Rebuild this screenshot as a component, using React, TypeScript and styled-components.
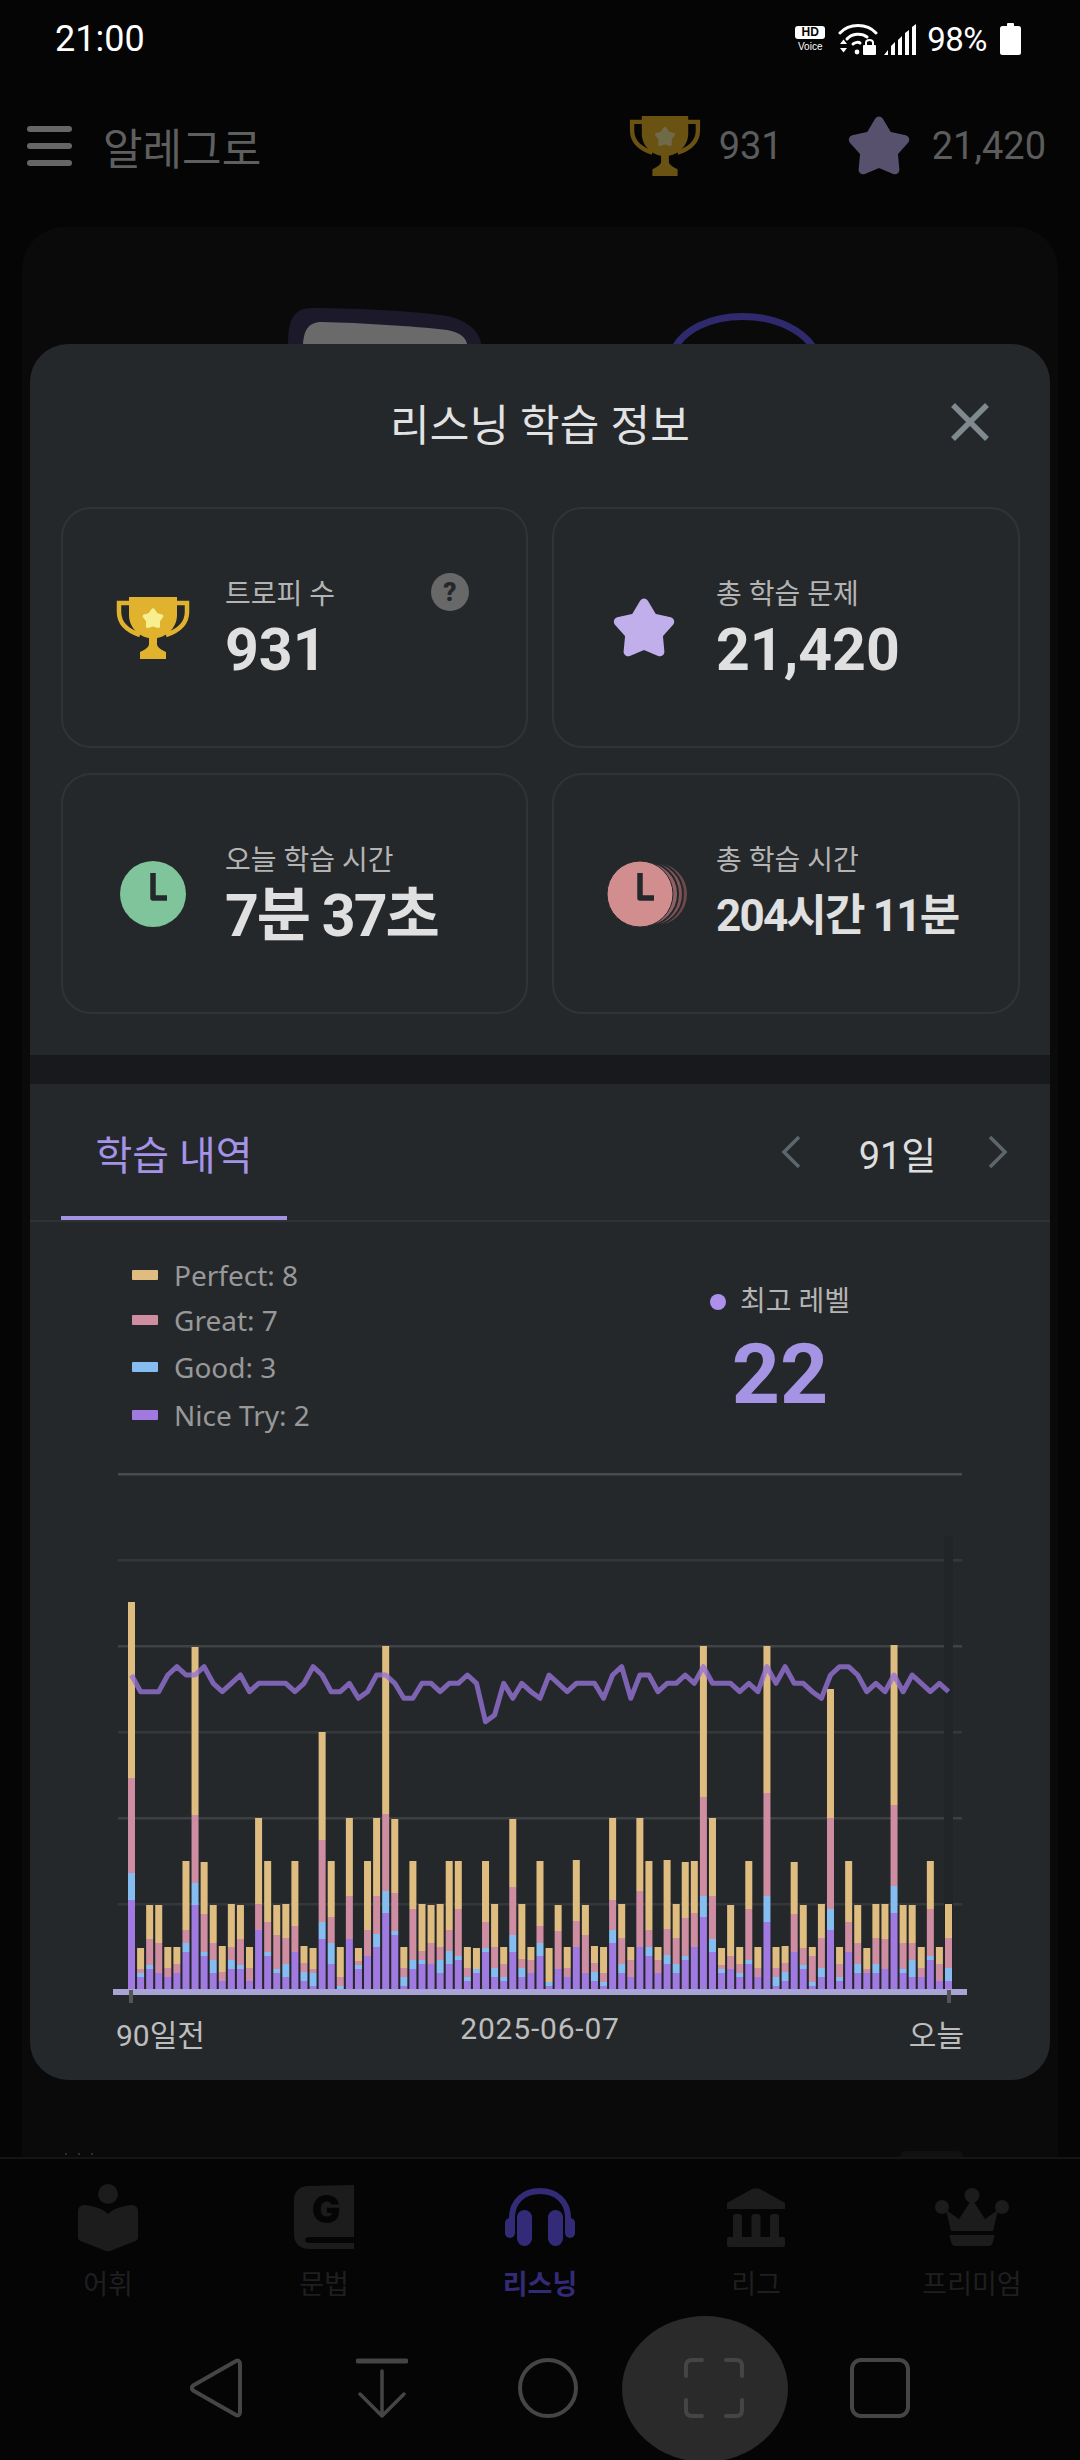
import React from 'react';
import styled, { createGlobalStyle } from 'styled-components';

const KR = `Roboto, "Noto Sans CJK KR", sans-serif`;

const Global = createGlobalStyle`
  html, body { margin: 0; padding: 0; background: #050506; }
  * { box-sizing: border-box; }
`;

const Screen = styled.div`
  position: relative;
  width: 1080px;
  height: 2460px;
  overflow: hidden;
  display: flex;
  flex-direction: column;
  background: #050506;
  font-family: ${KR};
`;

const StatusBar = styled.div`
  height: 76px;
  padding: 2px 59px 0 55px;
  display: flex;
  align-items: center;
  color: #fff;
`;
const Time = styled.div`
  font-size: 36px;
  flex: 1;
`;
const StatusIcons = styled.div`
  display: flex;
  align-items: center;
`;
const HdBadge = styled.div`
  width: 30px;
  margin-right: 13px;
  display: flex;
  flex-direction: column;
  align-items: center;
`;
const HdMark = styled.div`
  width: 30px;
  height: 13px;
  background: #fff;
  border-radius: 3px;
  color: #050506;
  font: 900 12px/13px "Liberation Sans", sans-serif;
  text-align: center;
  margin-bottom: 3px;
`;
const VoiceText = styled.div`
  font: 400 10px/10px "Liberation Sans", sans-serif;
  color: #fff;
`;
const SignalGap = styled.div`
  width: 6px;
`;
const Percent = styled.div`
  font-size: 33px;
  margin: 0 13px 0 10px;
  letter-spacing: -0.5px;
`;

const AppBar = styled.div`
  height: 140px;
  padding: 0 34px 0 27px;
  display: flex;
  align-items: center;
`;
const Burger = styled.div`
  width: 45px;
  display: flex;
  flex-direction: column;
  gap: 11px;
  margin-right: 31px;
`;
const BurgerLine = styled.div`
  height: 6px;
  border-radius: 3px;
  background: #666;
`;
const AppTitle = styled.div`
  flex: 1;
  font-size: 43px;
  color: #5f5f5f;
`;
const AppStat = styled.div<{ $gap: number }>`
  font-size: 38px;
  color: #5c5c5c;
  margin-left: ${p => p.$gap}px;
`;
const AppIconBox = styled.div<{ $gap?: number }>`
  display: flex;
  margin-left: ${p => p.$gap ?? 0}px;
`;

const BackCard = styled.div`
  flex: 1;
  margin: 11px 22px 0;
  padding-top: 81px;
  border-radius: 42px 42px 0 0;
  background: #0a0a0b;
  overflow: hidden;
  display: flex;
  flex-direction: column;
`;
const Peek = styled.svg`
  display: block;
`;
const CardFoot = styled.div`
  margin-top: auto;
  height: 6px;
  padding: 0 95px 0 43px;
  display: flex;
  justify-content: space-between;
  align-items: flex-end;
`;
const FootDots = styled.div`
  display: flex;
  gap: 11px;
  padding-bottom: 2px;
`;
const FootDot = styled.span`
  width: 2px;
  height: 2px;
  background: #2e2e2e;
`;
const FootTab = styled.div`
  width: 63px;
  height: 6px;
  border-radius: 8px 8px 0 0;
  background: #111;
`;

const BottomNav = styled.div`
  height: 159px;
  border-top: 2px solid #131516;
  display: flex;
  padding-top: 24px;
  background: #050506;
`;
const NavItem = styled.div<{ $active?: boolean }>`
  width: 216px;
  display: flex;
  flex-direction: column;
  align-items: center;
  color: ${p => (p.$active ? '#342b78' : '#1f1f20')};
  font-size: 27px;
  font-weight: ${p => (p.$active ? 700 : 400)};
`;
const NavIcon = styled.div`
  height: 68px;
  display: flex;
  align-items: center;
  margin-bottom: 12px;
`;

const SysNav = styled.div`
  height: 144px;
  display: flex;
  align-items: center;
  padding: 0 0 0 133px;
  background: #050506;
`;
const SysBtn = styled.div`
  position: relative;
  width: 166px;
  display: flex;
  justify-content: center;
`;
const CaptureDisc = styled.div`
  position: absolute;
  left: -9px;
  top: -42px;
  width: 166px;
  height: 146px;
  border-radius: 50%;
  background: #2a2a2a;
`;
const SysSvg = styled.svg`
  position: relative;
  display: block;
`;

const Modal = styled.div`
  position: absolute;
  left: 30px;
  top: 344px;
  width: 1020px;
  height: 1736px;
  border-radius: 38px;
  background: #25282b;
  overflow: hidden;
`;
const ModalHeader = styled.div`
  height: 163px;
  padding-bottom: 8px;
  display: grid;
  grid-template-columns: 1fr auto 1fr;
  align-items: center;
`;
const ModalTitle = styled.div`
  font-size: 43px;
  color: #e2e2e2;
  letter-spacing: 0.2px;
`;
const CloseBtn = styled.svg`
  justify-self: end;
  margin-right: 60px;
  display: block;
`;

const StatGrid = styled.div`
  padding: 0 30px 0 31px;
  display: grid;
  grid-template-columns: 467px 468px;
  grid-auto-rows: 241px;
  column-gap: 24px;
  row-gap: 25px;
`;
const StatCard = styled.div`
  position: relative;
  border: 2px solid #313437;
  border-radius: 30px;
  padding-left: 48px;
  display: flex;
  align-items: center;
`;
const StatIcon = styled.div`
  width: 84px;
  margin-right: 30px;
  display: flex;
  justify-content: center;
  svg {
    flex: none;
  }
`;
const StatText = styled.div`
  display: flex;
  flex-direction: column;
  padding-top: 5px;
`;
const StatLabel = styled.div`
  font-size: 28px;
  line-height: 36px;
  color: #b4b4b4;
`;
const StatValue = styled.div<{ $size?: number; $track?: number }>`
  font-size: ${p => p.$size ?? 59}px;
  line-height: 66px;
  margin-top: 4px;
  font-weight: 700;
  color: #e0e0e0;
  letter-spacing: ${p => p.$track ?? 0}px;
`;
const HelpBadge = styled.div`
  position: absolute;
  top: 64px;
  right: 57px;
  width: 38px;
  height: 38px;
  border-radius: 50%;
  background: #686868;
  color: #25282b;
  font: 900 26px/38px Roboto, sans-serif;
  text-align: center;
`;

const Band = styled.div`
  margin-top: 41px;
  height: 29px;
  background: #18191c;
`;

const TabRow = styled.div`
  height: 138px;
  border-bottom: 2px solid #303336;
  display: flex;
  align-items: stretch;
`;
const Tab = styled.div`
  width: 226px;
  height: 136px;
  margin-left: 31px;
  padding-top: 5px;
  border-bottom: 4px solid #a293e3;
  display: flex;
  align-items: center;
  justify-content: center;
  color: #a493e6;
  font-size: 40px;
  flex: none;
`;
const Pager = styled.div`
  margin-left: auto;
  padding: 0 42px 0 0;
  display: flex;
  align-items: center;
`;
const PagerValue = styled.div`
  width: 187px;
  padding-left: 6px;
  text-align: center;
  font-size: 38px;
  color: #dedede;
`;

const Summary = styled.div`
  height: 238px;
  display: flex;
`;
const Legend = styled.div`
  width: 651px;
  padding: 32px 0 0 102px;
  display: flex;
  flex-direction: column;
`;
const LegendRow = styled.div<{ $h: number }>`
  height: ${p => p.$h}px;
  display: flex;
  align-items: center;
  font: 400 28px "Noto Sans", sans-serif;
  color: #989898;
`;
const Swatch = styled.span<{ $color: string }>`
  width: 26px;
  height: 10px;
  margin-right: 16px;
  border-radius: 1px;
  background: ${p => p.$color};
`;
const Best = styled.div`
  width: 198px;
  padding-top: 56px;
  display: flex;
  flex-direction: column;
  align-items: center;
`;
const BestLabel = styled.div`
  display: flex;
  align-items: center;
  font-size: 28px;
  line-height: 48px;
  color: #b4b4b4;
`;
const BestDot = styled.span`
  width: 16px;
  height: 16px;
  border-radius: 50%;
  background: #ac90ec;
  margin-right: 14px;
`;
const BestValue = styled.div`
  font-size: 84px;
  line-height: 96px;
  margin-top: 1px;
  font-weight: 700;
  color: #a593e3;
`;

const Chart = styled.svg`
  display: block;
`;
const AxisLabels = styled.div`
  padding: 6px 86px 0 86px;
  display: grid;
  grid-template-columns: 1fr auto 1fr;
  font-size: 30px;
  color: #bdbdbd;
`;
const AxisDate = styled.span`
  letter-spacing: 0.8px;
`;
const AxisEnd = styled.span`
  justify-self: end;
`;

// Stack tops in reference pixels (×3), each bar: purple, blue, pink, yellow
const bars: number[][] = [
  [960,879,594,66],[1191,1179,1167,1104],[1167,1155,1077,975],[1179,1179,1089,975],[1191,1191,1164,1101],
  [1179,1179,1152,1101],[1116,1089,1050,843],[975,909,705,201],[1128,1116,1002,846],[1179,1140,1089,975],
  [1203,1203,1176,1098],[1167,1140,1101,972],[1167,1155,1077,975],[1203,1203,1164,1101],[1050,1050,972,714],
  [1128,1116,1026,843],[1179,1167,1065,975],[1191,1152,1074,972],[1116,1116,1038,843],[1203,1176,1149,1098],
  [1218,1179,1167,1104],[1077,1026,780,456],[1152,1089,1011,843],[1227,1218,1191,1101],[1077,1077,948,714],
  [1167,1155,1143,1104],[1128,1128,1050,843],[1101,1062,948,714],[999,933,702,198],[1065,1053,939,717],
  [1218,1191,1164,1101],[1167,1140,987,843],[1152,1140,1113,972],[1152,1152,1089,975],[1179,1140,1101,972],
  [1152,1113,1050,843],[1140,1128,987,843],[1203,1191,1164,1101],[1179,1167,1167,1104],[1116,1104,1026,843],
  [1191,1164,1101,972],[1203,1191,1152,1101],[1116,1065,921,717],[1191,1164,1137,972],[1179,1179,1140,1101],
  [1128,1089,1038,843],[1218,1206,1206,1104],[1167,1167,1053,975],[1191,1191,1164,1101],[1101,1101,1023,840],
  [1179,1179,1065,975],[1203,1176,1149,1098],[1218,1206,1179,1101],[1089,1050,960,714],[1179,1152,1074,972],
  [1191,1191,1140,1101],[1101,1101,933,714],[1128,1101,1050,843],[1179,1179,1140,1101],[1152,1125,1047,840],
  [1179,1152,1074,972],[1140,1128,1014,846],[1101,1101,999,843],[1011,948,651,198],[1116,1077,948,714],
  [1179,1167,1155,1104],[1167,1167,1128,975],[1191,1179,1152,1101],[1152,1140,987,843],[1191,1191,1164,1101],
  [1026,948,639,198],[1218,1191,1164,1101],[1203,1176,1149,1098],[1116,1116,1002,846],[1167,1155,1104,975],
  [1218,1206,1128,1101],[1191,1164,1074,972],[1050,987,714,327],[1203,1191,1152,1101],[1116,1116,1026,843],
  [1179,1152,1089,975],[1179,1179,1167,1104],[1179,1152,1074,972],[1167,1167,1077,972],[999,918,675,195],
  [1179,1167,1089,975],[1191,1140,1089,975],[1191,1191,1164,1101],[1140,1128,987,843],[1203,1203,1152,1101],
  [1203,1164,1074,972],
];
const levels = [
  285,335,335,335,285,260,285,285,260,310,335,310,285,335,310,310,310,310,335,310,260,285,335,335,310,355,335,285,285,310,
  355,355,310,310,335,310,310,285,310,425,405,310,355,310,335,355,285,310,335,310,310,310,355,285,260,355,285,285,335,310,
  310,285,310,260,310,310,310,335,310,335,260,310,260,310,310,335,355,285,260,260,285,335,310,335,285,335,285,310,335,310,335,
];
const stackColors = ['#a07ae0', '#85bdf0', '#cf8da1', '#dfbd80'];
const chartTop = 1460;
const toY = (z: number) => 1580 + z / 3 - chartTop;
const barX = (k: number) => 98 + k * (817 / 90);
const gridYs = [1474, 1560, 1646, 1732, 1818, 1904];
const gridColors = ['#474b4d', '#34383a', '#3f4345', '#34383a', '#3c4042', '#34383a'];

function starPoints(cx: number, cy: number, R: number, r: number) {
  const pts: string[] = [];
  for (let i = 0; i < 10; i++) {
    const rad = i % 2 === 0 ? R : r;
    const a = -Math.PI / 2 + (i * Math.PI) / 5;
    pts.push(`${(cx + rad * Math.cos(a)).toFixed(1)},${(cy + rad * Math.sin(a)).toFixed(1)}`);
  }
  return pts.join(' ');
}

const Trophy = ({ cup, inner, w = 74, h = 62 }: { cup: string; inner: string; w?: number; h?: number }) => (
  <svg width={w} height={h} viewBox="0 0 74 62">
    <path d="M14 6H3v9c0 12 9 19 21 23M60 6h11v9c0 12-9 19-21 23" fill="none" stroke={cup} strokeWidth="4.5" />
    <path d="M13 0H61V18C61 32 49 40 41 41V47C41 50 44 52 50 55V62H24V55C30 52 33 50 33 47V41C25 40 13 32 13 18Z" fill={cup} />
    <polygon points={starPoints(37, 22, 9, 5.5)} fill={inner} stroke={inner} strokeWidth="3.5" strokeLinejoin="round" />
  </svg>
);
const Star = ({ color, w = 64, h = 62 }: { color: string; w?: number; h?: number }) => (
  <svg width={w} height={h} viewBox="0 0 64 62">
    <polygon points={starPoints(32, 33, 27, 15)} fill={color} stroke={color} strokeWidth="9" strokeLinejoin="round" />
  </svg>
);
const Hands = () => (
  <path d="M33 12V37H47" fill="none" stroke="#25282b" strokeWidth="5.5" strokeLinejoin="round" />
);
const ClockFace = ({ color }: { color: string }) => (
  <svg width="66" height="66" viewBox="0 0 66 66">
    <circle cx="33" cy="33" r="33" fill={color} />
    <Hands />
  </svg>
);
const ClockStack = () => (
  <svg width="94" height="66" viewBox="-10 0 94 66">
    <circle cx="49" cy="33" r="32" fill="#6b4a4d" stroke="#25282b" strokeWidth="2" />
    <circle cx="44" cy="33" r="32" fill="#7e5558" stroke="#25282b" strokeWidth="2" />
    <circle cx="39" cy="33" r="32" fill="#8f6164" stroke="#25282b" strokeWidth="2" />
    <circle cx="33" cy="33" r="33" fill="#d28d8f" stroke="#25282b" strokeWidth="1" />
    <Hands />
  </svg>
);
const Wifi = () => (
  <svg width="40" height="32" viewBox="0 0 40 32" fill="none" stroke="#fff" strokeLinecap="round">
    <path d="M2 10C11 0 29 0 38 10" strokeWidth="3" />
    <path d="M9 16C14 10 24 10 29 14" strokeWidth="3" />
    <path d="M15 21C17 19 21 19 22 20" strokeWidth="3" />
    <circle cx="19" cy="29" r="2.4" fill="#fff" stroke="none" />
    <path d="M2 21L5.5 16.5 9 21ZM2 25L5.5 29.500 9 25Z" fill="#fff" stroke="none" />
    <rect x="25" y="22" width="13" height="10" rx="1" fill="#fff" stroke="none" />
    <path d="M28 22V19.500C28 16 35 16 35 19.500V22" strokeWidth="2" />
  </svg>
);
const Signal = () => (
  <svg width="33" height="31" viewBox="0 0 33 31" fill="#fff">
    <polygon points="0,31 4,26 4,31" />
    <polygon points="7,31 7,22 11,18 11,31" />
    <polygon points="14,31 14,16 18,12 18,31" />
    <polygon points="21,31 21,9 25,6 25,31" />
    <polygon points="28,31 28,3 32,0 32,31" />
  </svg>
);
const Battery = () => (
  <svg width="21" height="32" viewBox="0 0 21 32" fill="#fff">
    <rect x="7" y="0" width="7" height="4" rx="1" />
    <rect x="0" y="3" width="21" height="29" rx="2.500" />
  </svg>
);
const ReaderIcon = () => (
  <svg width="60" height="67" viewBox="0 0 60 67" fill="#1c1c1d">
    <circle cx="30" cy="10" r="10" />
    <path d="M0 27C0 23 3 21 7 21C15 22 24 24 30 30C36 24 45 22 53 21C57 21 60 23 60 27V53C60 56 58 57 55 58L32 67H28L5 58C2 57 0 56 0 53Z" />
  </svg>
);
const GrammarIcon = () => (
  <svg width="60" height="64" viewBox="0 0 60 64">
    <path fill="#1c1c1d" d="M14 1L60 0V52H16C9 52 9 58 16 58H60V64H16C6 64 0 58 0 50V15C0 6 6 1 14 1Z" />
    <text x="32" y="38" textAnchor="middle" fill="#050506" fontFamily="Inter, Roboto, sans-serif" fontWeight="900" fontSize="38">G</text>
  </svg>
);
const HeadphonesIcon = () => (
  <svg width="70" height="58" viewBox="0 0 70 58" fill="currentColor">
    <path d="M7 36V30C7 13 19 3 35 3C51 3 63 13 63 30V36" fill="none" stroke="currentColor" strokeWidth="6" />
    <rect x="12" y="22" width="15" height="36" rx="7.500" />
    <rect x="43" y="22" width="15" height="36" rx="7.500" />
    <rect x="0" y="30" width="10" height="20" rx="5" />
    <rect x="60" y="30" width="10" height="20" rx="5" />
  </svg>
);
const MuseumIcon = () => (
  <svg width="58" height="59" viewBox="0 0 58 59" fill="#1c1c1d">
    <path d="M25 1C27 0 31 0 33 1L58 15V21H0V15Z" />
    <rect x="6" y="26" width="9" height="26" rx="3" />
    <rect x="24.5" y="26" width="9" height="26" rx="3" />
    <rect x="43" y="26" width="9" height="26" rx="3" />
    <rect x="0" y="49" width="58" height="10" rx="2" />
  </svg>
);
const CrownIcon = () => (
  <svg width="74" height="58" viewBox="0 0 74 58" fill="#1c1c1d">
    <circle cx="37" cy="7.500" r="7.500" />
    <circle cx="7" cy="19" r="7" />
    <circle cx="67" cy="19" r="7" />
    <path d="M37 11L50 31L63 22L58 43H16L11 22L24 31Z" />
    <path d="M12 47H62L60 55C59 57 58 58 56 58H18C16 58 15 57 14 55Z" transform="translate(3.700 0) scale(0.9 1)" />
  </svg>
);

const navItems = [
  { label: '어휘', icon: <ReaderIcon /> },
  { label: '문법', icon: <GrammarIcon /> },
  { label: '리스닝', icon: <HeadphonesIcon />, active: true },
  { label: '리그', icon: <MuseumIcon /> },
  { label: '프리미엄', icon: <CrownIcon /> },
];

const legend = [
  { color: '#dfbd80', text: 'Perfect: 8', h: 42 },
  { color: '#cf8da1', text: 'Great: 7', h: 47 },
  { color: '#85bdf0', text: 'Good: 3', h: 48 },
  { color: '#a07ae0', text: 'Nice Try: 2', h: 48 },
];

const sysStroke = '#454545';

export default function App() {
  const linePts = levels
    .map((z, k) => `${(barX(k) + 3.5).toFixed(1)},${toY(z).toFixed(1)}`)
    .join(' ');
  return (
    <Screen>
      <Global />
      <StatusBar>
        <Time>21:00</Time>
        <StatusIcons>
          <HdBadge>
            <HdMark>HD</HdMark>
            <VoiceText>Voice</VoiceText>
          </HdBadge>
          <Wifi />
          <SignalGap />
          <Signal />
          <Percent>98%</Percent>
          <Battery />
        </StatusIcons>
      </StatusBar>

      <AppBar>
        <Burger>
          <BurgerLine />
          <BurgerLine />
          <BurgerLine />
        </Burger>
        <AppTitle>알레그로</AppTitle>
        <AppIconBox>
          <Trophy cup="#6a5213" inner="#6f6a47" w={74} h={60} />
        </AppIconBox>
        <AppStat $gap={17}>931</AppStat>
        <AppIconBox $gap={64}>
          <Star color="#57516d" />
        </AppIconBox>
        <AppStat $gap={21}>21,420</AppStat>
      </AppBar>

      <BackCard>
        <Peek width="1036" height="36" viewBox="0 0 1036 36">
          <path d="M266 36C266 14 270 0 290 0C340 0 400 4 425 8C445 12 458 24 459 36Z" fill="#1c1a2a" />
          <path d="M281 36C282 20 288 14 300 14C340 15 390 18 425 22C438 24 444 30 445 36Z" fill="#6a6a6a" />
          <path d="M650 46C668 -4 772 -4 795 46" fill="none" stroke="#2f2a6e" strokeWidth="7" />
        </Peek>
        <CardFoot>
          <FootDots>
            <FootDot />
            <FootDot />
            <FootDot />
          </FootDots>
          <FootTab />
        </CardFoot>
      </BackCard>

      <BottomNav>
        {navItems.map(item => (
          <NavItem key={item.label} $active={item.active}>
            <NavIcon>{item.icon}</NavIcon>
            {item.label}
          </NavItem>
        ))}
      </BottomNav>

      <SysNav>
        <SysBtn>
          <SysSvg width="52" height="60" viewBox="0 0 52 60" fill="none" stroke={sysStroke} strokeWidth="4" strokeLinejoin="round">
            <path d="M46 3C48 2 50 3 50 6V54C50 57 48 58 46 57L4 33C1 31 1 29 4 27Z" />
          </SysSvg>
        </SysBtn>
        <SysBtn>
          <SysSvg width="52" height="60" viewBox="0 0 52 60" fill="none" stroke={sysStroke} strokeWidth="4" strokeLinecap="round" strokeLinejoin="round">
            <path d="M2 3H50" strokeWidth="5" />
            <path d="M26 13V58M4 36L26 58L48 36" strokeWidth="3.500" />
          </SysSvg>
        </SysBtn>
        <SysBtn>
          <SysSvg width="60" height="60" viewBox="0 0 60 60">
            <circle cx="30" cy="30" r="28" fill="none" stroke={sysStroke} strokeWidth="4" />
          </SysSvg>
        </SysBtn>
        <SysBtn>
          <CaptureDisc />
          <SysSvg width="60" height="60" viewBox="0 0 60 60" fill="none" stroke={sysStroke} strokeWidth="4" strokeLinecap="round">
            <path d="M2 18V8C2 4 4 2 8 2H18M42 2H52C56 2 58 4 58 8V18M58 42V52C58 56 56 58 52 58H42M18 58H8C4 58 2 56 2 52V42" />
          </SysSvg>
        </SysBtn>
        <SysBtn>
          <SysSvg width="60" height="60" viewBox="0 0 60 60">
            <rect x="2" y="2" width="56" height="56" rx="9" fill="none" stroke={sysStroke} strokeWidth="4" />
          </SysSvg>
        </SysBtn>
      </SysNav>

      <Modal>
        <ModalHeader>
          <span />
          <ModalTitle>리스닝 학습 정보</ModalTitle>
          <CloseBtn width="40" height="40" viewBox="0 0 40 40">
            <path d="M3 3L37 37M37 3L3 37" stroke="#7f8a8f" strokeWidth="5.500" />
          </CloseBtn>
        </ModalHeader>

        <StatGrid>
          <StatCard>
            <StatIcon><Trophy cup="#e0b22e" inner="#f7ee8f" /></StatIcon>
            <StatText>
              <StatLabel>트로피 수</StatLabel>
              <StatValue>931</StatValue>
            </StatText>
            <HelpBadge>?</HelpBadge>
          </StatCard>
          <StatCard>
            <StatIcon><Star color="#c1afeb" /></StatIcon>
            <StatText>
              <StatLabel>총 학습 문제</StatLabel>
              <StatValue>21,420</StatValue>
            </StatText>
          </StatCard>
          <StatCard>
            <StatIcon><ClockFace color="#7fc49a" /></StatIcon>
            <StatText>
              <StatLabel>오늘 학습 시간</StatLabel>
              <StatValue $track={-2}>7분 37초</StatValue>
            </StatText>
          </StatCard>
          <StatCard>
            <StatIcon><ClockStack /></StatIcon>
            <StatText>
              <StatLabel>총 학습 시간</StatLabel>
              <StatValue $size={44} $track={-1.8}>204시간 11분</StatValue>
            </StatText>
          </StatCard>
        </StatGrid>

        <Band />

        <TabRow>
          <Tab>학습 내역</Tab>
          <Pager>
            <svg width="20" height="32" viewBox="0 0 20 32">
              <path d="M18 1L3 16L18 31" fill="none" stroke="#5c676d" strokeWidth="3.500" />
            </svg>
            <PagerValue>91일</PagerValue>
            <svg width="20" height="32" viewBox="0 0 20 32">
              <path d="M2 1L17 16L2 31" fill="none" stroke="#5c676d" strokeWidth="3.500" />
            </svg>
          </Pager>
        </TabRow>

        <Summary>
          <Legend>
            {legend.map(l => (
              <LegendRow key={l.text} $h={l.h}>
                <Swatch $color={l.color} />
                {l.text}
              </LegendRow>
            ))}
          </Legend>
          <Best>
            <BestLabel><BestDot />최고 레벨</BestLabel>
            <BestValue>22</BestValue>
          </Best>
        </Summary>

        <Chart width="1020" height="545" viewBox="0 0 1020 545">
          {gridYs.map((y, i) => (
            <rect key={y} x="88" y={y - chartTop - 1} width="844" height="2.500" fill={gridColors[i]} />
          ))}
          <rect x="914" y="76" width="9" height="453" fill="#222528" />
          {bars.map((b, k) => {
            const bottoms = [1227, b[0], b[1], b[2]];
            return (
              <g key={k}>
                {b.map((top, i) =>
                  bottoms[i] > top ? (
                    <rect key={i} x={barX(k)} y={toY(top)} width="7" height={(bottoms[i] - top) / 3} fill={stackColors[i]} />
                  ) : null,
                )}
              </g>
            );
          })}
          <polyline points={linePts} fill="none" stroke="#9472d4" strokeOpacity="0.8" strokeWidth="5" strokeLinejoin="round" />
          <rect x="83" y="529" width="854" height="6" fill="#a8a4d3" />
          <rect x="99" y="530" width="4" height="13" fill="#555" />
          <rect x="917" y="530" width="4" height="13" fill="#555" />
        </Chart>
        <AxisLabels>
          <span>90일전</span>
          <AxisDate>2025-06-07</AxisDate>
          <AxisEnd>오늘</AxisEnd>
        </AxisLabels>
      </Modal>
    </Screen>
  );
}
